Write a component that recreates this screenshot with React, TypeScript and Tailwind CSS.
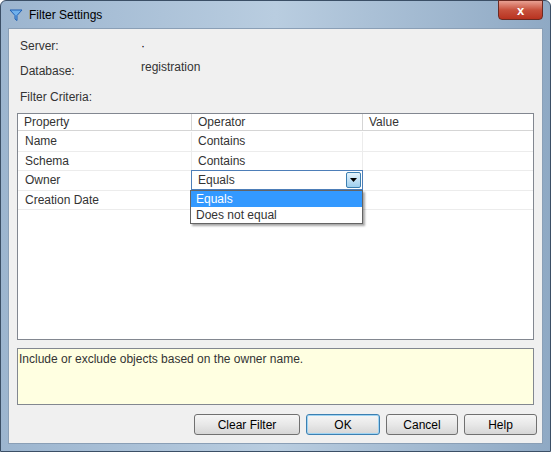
import React from 'react';

const rows = [
  { p: 'Name', o: 'Contains' },
  { p: 'Schema', o: 'Contains' },
  { p: 'Owner', o: 'Equals', active: true },
  { p: 'Creation Date', o: '' },
];

function Btn({ label, focus = false, w }: { label: string; focus?: boolean; w: string }) {
  return (
    <div
      className={`${w} h-[21px] flex items-center justify-center rounded-[3px] border text-[12px] text-black bg-gradient-to-b from-[#f6f6f6] via-[#e8e8e8] to-[#d6d6d6] ${
        focus ? 'border-[#3c7fb1] shadow-[inset_0_0_0_1px_#9fd4f3]' : 'border-[#707070]'
      }`}
    >
      {label}
    </div>
  );
}

export default function App() {
  return (
    <div className="w-[551px] h-[452px] bg-white overflow-hidden" style={{ fontFamily: '"Liberation Sans", Arial, sans-serif' }}>
      <div className="w-full h-full rounded-t-[6px] border border-[#3b4f66] bg-gradient-to-r from-[#9cb5cf] via-[#b9cde0] to-[#8fa9c4] flex flex-col px-[7px] pb-[7px]">
        {/* title bar */}
        <div className="h-[27px] flex items-center relative">
          <svg width="14" height="14" viewBox="0 0 14 14" className="ml-[1px]">
            <path d="M1 2 H13 L8 7.5 V12.5 L6 11 V7.5 Z" fill="#6fb0ec" stroke="#1e5fb3" strokeWidth="1" />
          </svg>
          <span className="ml-[6px] text-[12px] text-black">Filter Settings</span>
          <div className="absolute right-0 top-[-1px] w-[45px] h-[20px] rounded-b-[4px] border border-[#6b2a22] bg-gradient-to-b from-[#e8a093] via-[#c7503c] to-[#b8321f] flex items-center justify-center">
            <span className="text-white font-bold text-[13px] leading-none">x</span>
          </div>
        </div>
        {/* client */}
        <div className="flex-1 bg-[#f0f0f0] border border-[#8a9fb6] flex flex-col text-[12px] text-[#333]">
          <div className="flex h-[18px] mt-[8px] items-center pl-[11px]">
            <span className="w-[121px]">Server:</span>
            <span className="text-black">·</span>
          </div>
          <div className="flex h-[18px] mt-[5px] items-start pl-[11px]">
            <span className="w-[121px] mt-[2px]">Database:</span>
            <span className="-mt-[2px]">registration</span>
          </div>
          <div className="h-[18px] mt-[10px] pl-[11px] flex items-center">Filter Criteria:</div>
          <div className="mx-[8px] mt-[7px] h-[227px] bg-white border border-[#828790] relative">
            <div className="flex h-[17px] border-b border-[#d5d5d5] items-center">
              <div className="w-[174px] pl-[6px] border-r border-[#d5d5d5] h-full flex items-center">Property</div>
              <div className="w-[171px] pl-[6px] border-r border-[#d5d5d5] h-full flex items-center">Operator</div>
              <div className="pl-[6px]">Value</div>
            </div>
            <div className="h-[1px]" />
            {rows.map((r) => (
              <div key={r.p} className="flex h-[19.5px] border-b border-[#ececec] items-center">
                <div className="w-[174px] pl-[7px] border-r border-[#ececec] h-full flex items-center">{r.p}</div>
                {r.active ? (
                  <div className="w-[172px] -ml-[1px] h-[20px] border border-[#4d7eb8] bg-white flex items-center relative z-10">
                    <span className="pl-[6px] flex-1">Equals</span>
                    <div className="w-[15px] h-[16px] mr-[1px] rounded-[2px] border border-[#3c7fb1] bg-gradient-to-b from-[#e4f3fc] to-[#9ecfef] flex items-center justify-center">
                      <svg width="7" height="4" viewBox="0 0 7 4"><path d="M0 0 H7 L3.5 4 Z" fill="#000" /></svg>
                    </div>
                  </div>
                ) : (
                  <div className="w-[171px] pl-[6px] border-r border-[#ececec] h-full flex items-center">{r.o}</div>
                )}
              </div>
            ))}
            <div className="absolute left-[172px] top-[76px] w-[173px] bg-white border border-[#646464] shadow-[2px_2px_2px_rgba(0,0,0,0.35)] z-20">
              <div className="h-[16px] bg-[#3399ff] text-white pl-[5px] flex items-center">Equals</div>
              <div className="h-[16px] pl-[5px] flex items-center">Does not equal</div>
            </div>
          </div>
          <div className="mx-[8px] mt-[8px] h-[57px] bg-[#ffffe1] border border-[#828790] px-[1px] pt-[1px]">
            Include or exclude objects based on the owner name.
          </div>
          <div className="flex justify-end gap-[6px] mr-[5px] mt-[9px]">
            <Btn label="Clear Filter" w="w-[106px]" />
            <Btn label="OK" focus w="w-[74px]" />
            <Btn label="Cancel" w="w-[72px]" />
            <Btn label="Help" w="w-[73px]" />
          </div>
        </div>
      </div>
    </div>
  );
}
